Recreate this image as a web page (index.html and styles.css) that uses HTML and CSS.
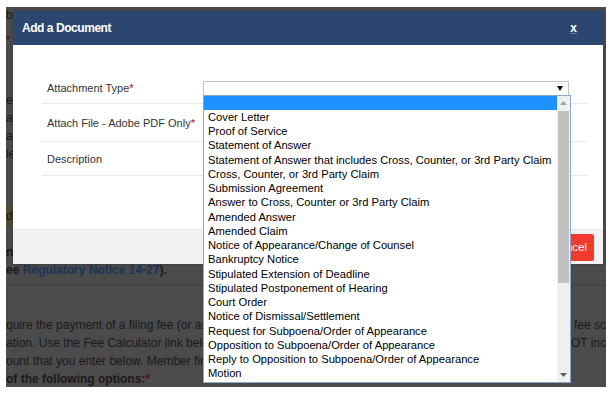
FILE: index.html
```html
<!DOCTYPE html>
<html lang="en">
<head>
  <meta charset="UTF-8" />
  <meta name="viewport" content="width=device-width, initial-scale=1" />
  <title>Add a Document</title>
  <link rel="stylesheet" href="styles.css">
</head>
<body>

<div class="screen">
  <!-- page behind the overlay -->
  <div class="page">
    <div class="pg-top">b</div>
    <div class="pg-star">*</div>
    <div class="pg-lines">
      <div class="pg-line">er</div>
      <div class="pg-line">ac</div>
      <div class="pg-line">ati</div>
      <div class="pg-line">le</div>
    </div>
    <div class="pg-note">d</div>
    <div class="pg-line pg-bold pg-gap">ni</div>
    <div class="pg-line pg-bold">ee <a class="pg-link">Regulatory Notice 14-27</a>).</div>
    <hr class="pg-rule">
    <div class="pg-para">
      <div class="pg-row"><span>quire the payment of a filing fee (or an</span><span>fee sc</span></div>
      <div class="pg-row"><span>ation. Use the Fee Calculator link belo</span><span>OT inc</span></div>
      <div class="pg-row"><span>ount that you enter below. Member fir</span><span></span></div>
    </div>
    <div class="pg-line pg-bold">of the following options:<span class="req">*</span></div>
  </div>

  <div class="modal">
    <div class="modal-head">
      <span class="modal-title">Add a Document</span>
      <a class="modal-close">x</a>
    </div>
    <div class="modal-body">
      <div class="form-row row-type">
        <label class="form-label">Attachment Type<span class="req">*</span></label>
        <div class="field">
          <div class="select-box">
            <svg class="select-arrow" width="6" height="5" viewBox="0 0 6 5"><path d="M0 0H6L3 5Z" fill="#000"/></svg>
          </div>
          <div class="dropdown">
            <ul class="options">
              <li class="active">&nbsp;</li>
              <li>Cover Letter</li>
              <li>Proof of Service</li>
              <li>Statement of Answer</li>
              <li>Statement of Answer that includes Cross, Counter, or 3rd Party Claim</li>
              <li>Cross, Counter, or 3rd Party Claim</li>
              <li>Submission Agreement</li>
              <li>Answer to Cross, Counter or 3rd Party Claim</li>
              <li>Amended Answer</li>
              <li>Amended Claim</li>
              <li>Notice of Appearance/Change of Counsel</li>
              <li>Bankruptcy Notice</li>
              <li>Stipulated Extension of Deadline</li>
              <li>Stipulated Postponement of Hearing</li>
              <li>Court Order</li>
              <li>Notice of Dismissal/Settlement</li>
              <li>Request for Subpoena/Order of Appearance</li>
              <li>Opposition to Subpoena/Order of Appearance</li>
              <li>Reply to Opposition to Subpoena/Order of Appearance</li>
              <li>Motion</li>
            </ul>
            <div class="scrollbar">
              <div class="sb-btn"><svg width="7" height="4" viewBox="0 0 7 4"><path d="M0 4L3.5 0L7 4Z" fill="#a3a3a3"/></svg></div>
              <div class="sb-thumb"></div>
              <div class="sb-track"></div>
              <div class="sb-btn"><svg width="7" height="4" viewBox="0 0 7 4"><path d="M0 0H7L3.5 4Z" fill="#5f5f5f"/></svg></div>
            </div>
          </div>
        </div>
      </div>
      <div class="form-row row-file">
        <label class="form-label">Attach File - Adobe PDF Only<span class="req">*</span></label>
      </div>
      <div class="form-row row-desc">
        <label class="form-label">Description</label>
      </div>
    </div>
    <div class="modal-foot">
      <button class="btn btn-upload">Upload</button>
      <button class="btn btn-cancel">Cancel</button>
    </div>
  </div>
</div>

</body>
</html>
```

FILE: styles.css
```css
body {
  margin: 0;
  background-color: #fff;
  font-family: "Liberation Sans", Arial, sans-serif;
}
.screen {
  position: relative;
  margin: 7px 0 0 6px;
  width: 600px;
  height: 380px;
  background-color: #4b4b4b;
  overflow: hidden;
  color: #1a1a1a;
}

/* page behind the overlay */
.page {
  font-size: 12px;
  white-space: nowrap;
}
.pg-top {
  height: 16px;
  line-height: 16px;
}
.pg-star {
  margin-top: 9px;
  height: 16px;
  line-height: 16px;
  color: #5a1010;
}
.pg-lines {
  margin-top: 43px;
}
.pg-line {
  height: 18px;
  line-height: 18px;
}
.pg-note {
  margin-top: 42px;
  height: 23px;
  line-height: 23px;
  width: 60px;
  background-color: #4f4a3a;
}
.pg-gap {
  margin-top: 15px;
}
.pg-bold {
  font-weight: bold;
}
.pg-link {
  color: #1b3557;
}
.pg-rule {
  margin: 6px 0 0;
  border: none;
  border-top: 1px solid #404040;
}
.pg-para {
  margin-top: 30px;
}
.pg-row {
  display: flex;
  justify-content: space-between;
  width: 600px;
  height: 18px;
  line-height: 18px;
}
.req {
  color: #c00;
}
.page .req {
  color: #5a1010;
}

/* modal */
.modal {
  position: absolute;
  left: 7px;
  top: 4px;
  width: 590px;
  background-color: #fff;
  box-shadow: 0 0 3px rgba(0, 0, 0, 0.3);
}
.modal-head {
  display: flex;
  align-items: center;
  justify-content: space-between;
  height: 34px;
  padding: 0 26px 0 9px;
  background-color: #2c4670;
  color: #fff;
  font-weight: bold;
}
.modal-title {
  font-size: 12px;
  letter-spacing: -0.45px;
}
.modal-close {
  font-size: 12px;
  text-decoration: underline;
  text-decoration-color: #4c72d6;
}
.modal-body {
  padding: 28px 16px 53px 29px;
  height: 184px;
  box-sizing: border-box;
}
.form-row {
  display: flex;
  align-items: center;
  border-bottom: 1px solid #e9e9e9;
  box-sizing: border-box;
}
.row-type { height: 31px; }
.row-file { height: 38px; }
.row-desc { height: 34px; }
.form-label {
  width: 156px;
  padding-left: 5px;
  font-size: 11px;
  color: #333;
}
.field {
  position: relative;
}
.select-box {
  display: flex;
  align-items: center;
  justify-content: flex-end;
  width: 366px;
  height: 15px;
  padding-right: 5px;
  border: 1px solid #c4c4c4;
  box-sizing: border-box;
  background-color: #fff;
}
.dropdown {
  position: absolute;
  top: 14px;
  left: 0;
  display: flex;
  width: 368px;
  height: 288px;
  border: 1px solid #8aa6c9;
  box-sizing: border-box;
  background-color: #fff;
  z-index: 5;
}
.options {
  flex: 1;
  margin: 0;
  padding: 0;
  list-style: none;
  font-size: 11.2px;
  line-height: 14.25px;
  color: #000;
  white-space: nowrap;
}
.options li {
  height: 14.25px;
  padding-left: 4px;
}
.options li.active {
  background-color: #1e90ff;
}
.scrollbar {
  display: flex;
  flex-direction: column;
  align-items: center;
  width: 13px;
  background-color: #f0f0f0;
}
.sb-btn {
  display: flex;
  align-items: center;
  justify-content: center;
  width: 13px;
  height: 14px;
}
.sb-thumb {
  width: 11px;
  height: 172px;
  margin-top: 1px;
  background-color: #c1c1c1;
}
.sb-track {
  flex: 1;
}
.modal-foot {
  display: flex;
  align-items: center;
  justify-content: flex-end;
  gap: 5px;
  height: 35px;
  padding: 0 9px;
  border-top: 1px solid #e5e5e5;
  box-sizing: border-box;
  background-color: #f2f2f2;
}
.btn {
  height: 27px;
  padding: 0 7px;
  border: none;
  border-radius: 2px;
  color: #fff;
  font-family: "Liberation Sans", Arial, sans-serif;
  font-size: 11.5px;
}
.btn-upload {
  background-color: #2c4670;
}
.btn-cancel {
  background-color: #f13a2d;
}
```
